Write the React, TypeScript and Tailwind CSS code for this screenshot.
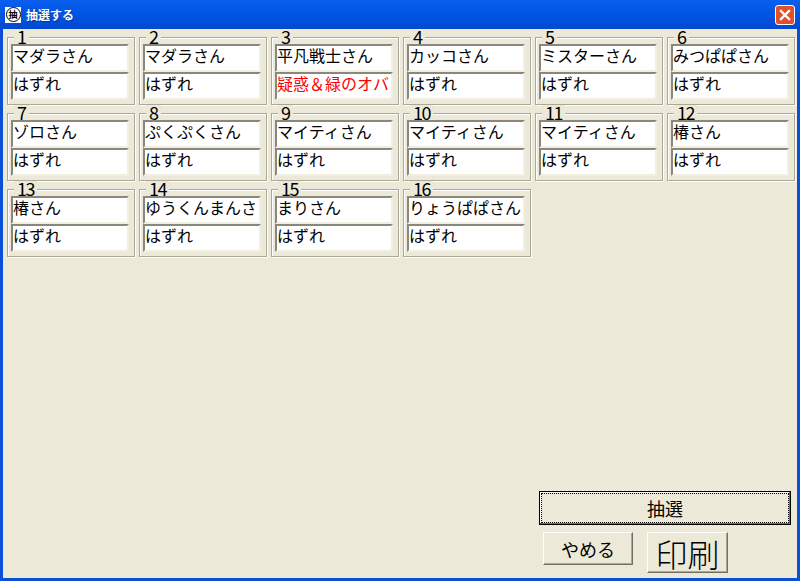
const entries = [
  { name: 'マダラさん', result: 'はずれ' },
  { name: 'マダラさん', result: 'はずれ' },
  { name: '平凡戦士さん', result: '疑惑\uFF06緑のオバ', win: true },
  { name: 'カッコさん', result: 'はずれ' },
  { name: 'ミスターさん', result: 'はずれ' },
  { name: 'みつぱぱさん', result: 'はずれ' },
  { name: 'ゾロさん', result: 'はずれ' },
  { name: 'ぷくぷくさん', result: 'はずれ' },
  { name: 'マイティさん', result: 'はずれ' },
  { name: 'マイティさん', result: 'はずれ' },
  { name: 'マイティさん', result: 'はずれ' },
  { name: '椿さん', result: 'はずれ' },
  { name: '椿さん', result: 'はずれ' },
  { name: 'ゆうくんまんさん', result: 'はずれ' },
  { name: 'まりさん', result: 'はずれ' },
  { name: 'りょうぱぱさん', result: 'はずれ' },
];

function Field({ value, red }: { value: string; red?: boolean }) {
  return (
    <div className="h-[28px] w-[118px] bg-white border-2 border-t-[#8a887c] border-l-[#8a887c] border-r-[#f1efe2] border-b-[#f1efe2]">
      <div className={`-mt-[2px] w-[112px] overflow-hidden whitespace-nowrap text-[16px] leading-[22px] ${red ? 'text-[#ff0000]' : 'text-black'}`}>
        {value}
      </div>
    </div>
  );
}

function Entry({ no, name, result, win }: { no: number; name: string; result: string; win?: boolean }) {
  return (
    <div className="relative h-[68px] border border-[#aca899] shadow-[inset_1px_1px_0_#fff,1px_1px_0_#fff] pt-[6px] pl-[3px]">
      <span className="absolute left-[6px] top-[-9px] bg-[#ece9d8] px-[3px] text-[18px] leading-[14px] tracking-[-1.5px] text-black">{no}</span>
      <Field value={name} />
      <Field value={result} red={win} />
    </div>
  );
}

function RaisedButton({ label, className }: { label: string; className: string }) {
  return (
    <button className={`bg-[#ece9d8] border border-t-white border-l-white border-r-[#716f64] border-b-[#716f64] shadow-[inset_-1px_-1px_0_#aca899] ${className}`}>
      {label}
    </button>
  );
}

export default function App() {
  return (
    <div className="flex h-[581px] w-[800px] flex-col overflow-hidden bg-[#0a4fd8] font-['Noto_Sans_CJK_JP',sans-serif]">
      {/* title bar */}
      <div className="flex h-[29px] shrink-0 items-center bg-gradient-to-b from-[#0a5fee] via-[#0054e3] to-[#0349d0] pl-[5px] pr-[5px]">
        <div className="flex h-[16px] w-[16px] items-center justify-center bg-white">
          <div className="flex h-[15px] w-[15px] items-center justify-center rounded-full border border-black text-[9px] font-bold leading-none text-black">抽</div>
        </div>
        <span className="ml-[5px] text-[12px] font-bold text-white [text-shadow:1px_1px_0_#0f2f9c]">抽選する</span>
        <div className="ml-auto flex h-[20px] w-[20px] items-center justify-center rounded-[3px] border border-white bg-[#e0502c]">
          <svg width="12" height="12" viewBox="0 0 12 12" fill="none" stroke="white" strokeWidth="2.4" strokeLinecap="square">
            <path d="M2 2l8 8M10 2l-8 8" />
          </svg>
        </div>
      </div>

      {/* client area */}
      <div className="mx-[3px] mb-[3px] flex min-h-0 flex-1 flex-col bg-[#ece9d8] pl-[4px] pr-[6px] pt-[8px] pb-[5px]">
        <div className="grid grid-cols-[repeat(6,128px)] gap-x-[4px] gap-y-[8px]">
          {entries.map((e, i) => (
            <Entry key={i} no={i + 1} name={e.name} result={e.result} win={e.win} />
          ))}
        </div>

        <div className="mt-auto flex flex-col items-end">
          <button className="h-[34px] w-[252px] border border-black bg-[#ece9d8] p-[1px] shadow-[inset_-1px_-1px_0_#716f64,inset_1px_1px_0_#fff]">
            <span className="flex h-full w-full items-center justify-center border border-dotted border-black text-[18px] leading-none text-black">抽選</span>
          </button>
          <div className="mt-[7px] mr-[63px] flex items-start gap-[14px]">
            <RaisedButton label="やめる" className="h-[33px] w-[90px] text-[18px] leading-none text-black" />
            <RaisedButton label="印刷" className="h-[41px] w-[81px] text-[32px] font-light leading-none text-black" />
          </div>
        </div>
      </div>
    </div>
  );
}
